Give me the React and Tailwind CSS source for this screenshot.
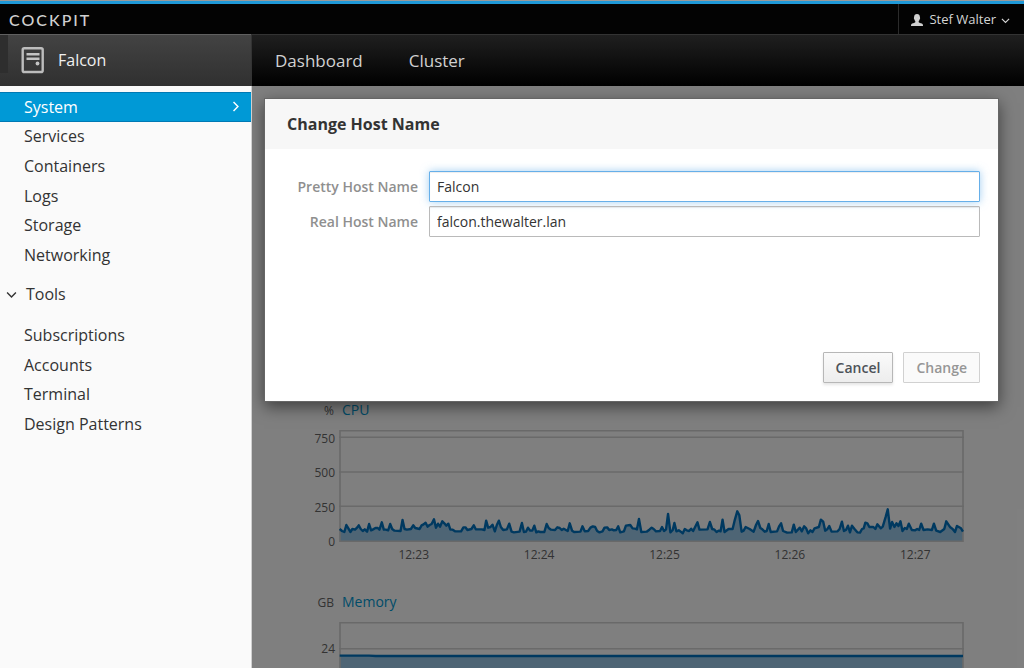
import React from 'react';

const systemLinks = ['System', 'Services', 'Containers', 'Logs', 'Storage', 'Networking'];
const toolLinks = ['Subscriptions', 'Accounts', 'Terminal', 'Design Patterns'];

const cpuPoints =
  '2,297 9,303 16,306 22,285 28,295 34,306 40,297 48,299 54,293 59,286 65,297 71,303 77,298 84,305 90,282 96,301 102,298 109,294 116,294 121,299 128,277 134,299 140,299 147,301 153,282 159,297 166,302 184,303 190,270 196,297 203,299 215,297 222,286 228,294 241,297 247,286 253,283 259,278 265,290 271,285 277,282 284,268 290,293 296,281 302,290 309,274 315,280 321,287 327,281 333,299 340,299 347,304 365,304 372,292 378,292 384,300 396,297 403,286 409,298 427,298 435,300 440,272 446,293 453,291 459,284 466,304 472,285 478,272 484,291 491,300 502,298 509,281 516,305 523,307 540,305 547,279 553,306 559,305 565,293 572,302 578,302 584,287 590,307 596,304 602,306 614,306 621,282 627,294 634,299 646,300 653,292 660,294 666,300 672,296 684,303 690,280 697,302 703,306 722,305 728,289 735,304 745,303 752,293 759,289 766,291 772,303 779,307 788,304 794,293 802,292 808,300 816,298 822,301 829,300 835,289 841,307 852,304 858,287 871,285 878,295 885,296 891,298 897,267 904,306 920,305 928,299 935,293 941,297 948,304 960,303 966,291 972,303 978,298 984,252 991,307 998,300 1003,279 1009,304 1016,301 1022,305 1028,310 1034,297 1040,301 1047,303 1053,296 1059,303 1072,277 1078,299 1102,298 1109,276 1116,297 1123,299 1129,306 1135,302 1141,304 1147,269 1153,306 1165,297 1177,297 1183,272 1191,244 1197,255 1204,305 1210,302 1216,291 1228,297 1240,305 1247,285 1253,273 1260,294 1266,298 1273,305 1279,303 1285,282 1291,306 1310,304 1316,289 1322,280 1328,303 1340,308 1354,307 1360,284 1366,306 1378,293 1384,304 1391,289 1397,295 1403,310 1410,301 1416,306 1422,295 1435,291 1441,269 1448,275 1454,302 1460,298 1466,288 1473,305 1491,304 1497,297 1504,275 1510,303 1516,300 1522,287 1528,307 1534,287 1541,296 1550,307 1558,308 1564,297 1569,295 1574,278 1580,280 1586,291 1598,291 1604,297 1610,283 1620,295 1626,290 1635,260 1641,238 1648,296 1654,276 1661,291 1667,280 1673,288 1679,274 1685,303 1692,294 1698,297 1704,281 1713,300 1723,301 1729,297 1735,300 1741,281 1748,300 1760,298 1773,300 1779,281 1786,302 1798,306 1810,297 1816,274 1828,292 1835,297 1842,306 1848,288 1860,295 1866,305';

const memoryPoints = '2,101 90,101 110,102 1866,102';

const charts = [
  {
    unit: '%',
    title: 'CPU',
    yLabels: ['750', '500', '250', '0'],
    axisClass: 'mt-[10px] h-[119px]',
    gridLines: [22, 126, 229],
    points: cpuPoints,
    times: ['12:23', '12:24', '12:25', '12:26', '12:27'],
  },
  {
    unit: 'GB',
    title: 'Memory',
    yLabels: ['24'],
    axisClass: 'mt-[28px]',
    gridLines: [80],
    points: memoryPoints,
    times: [],
  },
];

function Chevron({ className, d }) {
  return (
    <svg viewBox="0 0 10 10" className={className} fill="none" stroke="currentColor" strokeWidth="1.3" aria-hidden="true">
      <path d={d} />
    </svg>
  );
}

function ServerIcon() {
  return (
    <svg viewBox="0 0 24 28" className="h-7 w-6 shrink-0" aria-hidden="true">
      <rect x="1.700" y="2.2" width="20" height="23.8" rx="1.6" fill="none" stroke="#bdbdbd" strokeWidth="2.4" />
      <path d="M5.500 7h13v2.600h-13zM5.500 11.500h13v2.600h-13z" fill="#c4c4c4" />
      <circle cx="16.500" cy="17.500" r="1.900" fill="#c4c4c4" />
    </svg>
  );
}

function UserIcon() {
  return (
    <svg viewBox="0 0 12 12" className="size-3 shrink-0" fill="#d0d0d0" aria-hidden="true">
      <path d="M6 0C4.200 0 3.100 1.200 3.100 3.100c0 .5-.3.700-.2 1.300.1.500.4.600.5 1 .2.700.5 1.200.9 1.700v1.200C3.700 9 .8 9.300.3 10.200 0 10.700 0 12 0 12h12s0-1.300-.3-1.800C11.200 9.300 8.300 9 7.700 8.300V7.100c.4-.5.700-1 .9-1.700.1-.4.4-.5.5-1 .1-.6-.2-.8-.2-1.300C8.900 1.200 7.800 0 6 0z" />
    </svg>
  );
}

function SideLink({ label, active }) {
  return (
    <li className="flex">
      <a
        href="#"
        aria-current={active ? 'page' : undefined}
        className={
          active
            ? 'flex flex-1 items-center justify-between border-y border-[#0079b4] bg-[#0099d6] pr-[10px] pl-6 text-white'
            : 'flex flex-1 items-center pl-6'
        }
      >
        {label}
        {active && <Chevron className="size-[11px]" d="M3.200 1l4 4-4 4" />}
      </a>
    </li>
  );
}

function Chart({ unit, title, yLabels, axisClass, gridLines, points, times }) {
  return (
    <section className="grid grid-cols-[83px_1fr] gap-x-1 text-xs text-[#666]">
      <span className="self-center pt-px pr-px text-right leading-5">{unit}</span>
      <h2 className="pl-[3px] text-sm leading-5">
        <a href="#" className="text-[#0099d3]">{title}</a>
      </h2>
      <div className={axisClass}>
        <div className="flex h-full flex-col justify-between text-right leading-4">
          {yLabels.map((y) => (
            <span key={y}>{y}</span>
          ))}
        </div>
      </div>
      <div className="mt-[9px]">
        <svg viewBox="0 0 1869 336" preserveAspectRatio="none" className="block h-28 w-full" aria-hidden="true">
          {gridLines.map((y) => (
            <path key={y} d={`M0 ${y}H1869`} stroke="#d4d4d4" strokeWidth="1.5" vectorEffect="non-scaling-stroke" />
          ))}
          <polygon points={`2,336 ${points} 1866,336`} fill="#9ccaea" />
          <rect x="3" y="2" width="1863" height="332" fill="none" stroke="#d2d2d2" strokeWidth="1.6" vectorEffect="non-scaling-stroke" />
          <polyline points={points} fill="none" stroke="#0073c0" strokeWidth="2.4" strokeLinejoin="round" vectorEffect="non-scaling-stroke" />
        </svg>
        <div className="-mr-[14px] grid grid-cols-5 pt-[5px] pl-3 text-center leading-4">
          {times.map((t) => (
            <span key={t}>{t}</span>
          ))}
        </div>
      </div>
    </section>
  );
}

function HostNameDialog() {
  return (
    <div
      role="dialog"
      aria-labelledby="dialog-title"
      className="border border-[#666] bg-white bg-clip-padding shadow-[0_5px_15px_rgba(0,0,0,0.5)]"
    >
      <header className="bg-[#f7f7f7] px-[22px] py-[13px]">
        <h1 id="dialog-title" className="text-base leading-6 font-bold text-[#333]">Change Host Name</h1>
      </header>
      <form>
        <div className="grid min-h-[203px] grid-cols-[153px_1fr] content-start gap-x-[11px] gap-y-1 pt-[22px] pr-[18px] text-sm">
          <label htmlFor="pretty" className="self-center text-right font-semibold text-[#8f8f8f]">Pretty Host Name</label>
          <input
            id="pretty"
            defaultValue="Falcon"
            className="h-[31px] w-full rounded-[1px] border border-[#66afe9] px-[7px] text-[#333] shadow-[inset_0_1px_1px_rgba(0,0,0,0.075),0_0_8px_rgba(102,175,233,0.6)] outline-none"
          />
          <label htmlFor="real" className="self-center text-right font-semibold text-[#8f8f8f]">Real Host Name</label>
          <input
            id="real"
            defaultValue="falcon.thewalter.lan"
            className="h-[31px] w-full rounded-[1px] border border-[#bababa] px-[7px] text-[#333] shadow-[inset_0_1px_1px_rgba(0,0,0,0.075)] outline-none"
          />
        </div>
        <footer className="flex justify-end gap-[10px] pr-[18px] pb-[18px] text-sm font-semibold">
          <button type="button" className="h-[31px] rounded-[1px] border border-[#b7b7b7] bg-linear-to-b from-[#fafafa] to-[#ededed] px-3 text-[#4d5258] shadow-[0_2px_3px_rgba(0,0,0,0.1)]">
            Cancel
          </button>
          <button type="submit" disabled className="h-[31px] rounded-[1px] border border-[#d1d1d1] bg-[#fafafa] px-3 text-[#969696]">
            Change
          </button>
        </footer>
      </form>
    </div>
  );
}

export default function App() {
  return (
    <div className="flex h-screen flex-col overflow-hidden bg-white font-['Open_Sans',sans-serif] text-[#333]">
      <header className="shrink-0 border-t border-[#9a9a9a]">
        <div className="flex h-[33px] items-stretch justify-between border-t-[3px] border-[#1f99d8] bg-[#030303]">
          <a href="#" className="flex items-center pt-[2px] pl-[9px] font-[Lato,sans-serif] text-base font-medium tracking-[2px] text-[#d0d0d0]">COCKPIT</a>
          <button type="button" className="flex items-center gap-[6px] border-l border-[#2b2b2b] pt-[2px] pr-[14px] pl-3 text-[13px] text-[#d5d5d5]">
            <UserIcon />
            <span className="flex items-center gap-[5px]">
              Stef Walter
              <Chevron className="size-[9px]" d="M1 3.200l4 4 4-4" />
            </span>
          </button>
        </div>
        <nav className="flex h-[52px] bg-linear-to-b/srgb from-[#202020] to-black">
          <a href="#" className="flex w-[251px] items-center border-t border-[#606060] bg-linear-to-b from-[#434343] to-[#303030] pb-px text-base text-[#f0f0f0]">
            <span className="mr-[13px] h-[38px] w-2 self-start bg-[#2e2e2e]" />
            <ServerIcon />
            <span className="pl-[13px]">Falcon</span>
          </a>
          <div className="flex flex-1 items-center gap-[46px] border-t border-l border-[#333] pl-[23px] text-[17px] text-[#d1d1d1]">
            <a href="#">Dashboard</a>
            <a href="#">Cluster</a>
          </div>
        </nav>
      </header>

      <div className="flex min-h-0 flex-1">
        <aside className="w-[252px] shrink-0 border-r border-[#d0d0d0] bg-[#fafafa] pt-[6px] text-base">
          <ul className="grid h-[178px] auto-rows-fr">
            {systemLinks.map((l) => (
              <SideLink key={l} label={l} active={l === 'System'} />
            ))}
          </ul>
          <button type="button" className="mt-3 flex items-center gap-[9px] pl-[6px] leading-6">
            <Chevron className="size-[11px]" d="M1 3.200l4 4 4-4" />
            Tools
          </button>
          <ul className="mt-[14px] grid h-[119px] auto-rows-fr">
            {toolLinks.map((l) => (
              <SideLink key={l} label={l} />
            ))}
          </ul>
        </aside>

        <main className="relative min-w-0 flex-1 overflow-hidden">
          <div className="flex flex-col gap-[29px] pt-[314px] pr-[60px]">
            {charts.map((c) => (
              <Chart key={c.title} {...c} />
            ))}
          </div>
          <div className="absolute inset-0 bg-black/50 pt-3 pr-[25px] pl-3">
            <HostNameDialog />
          </div>
        </main>
      </div>
    </div>
  );
}
